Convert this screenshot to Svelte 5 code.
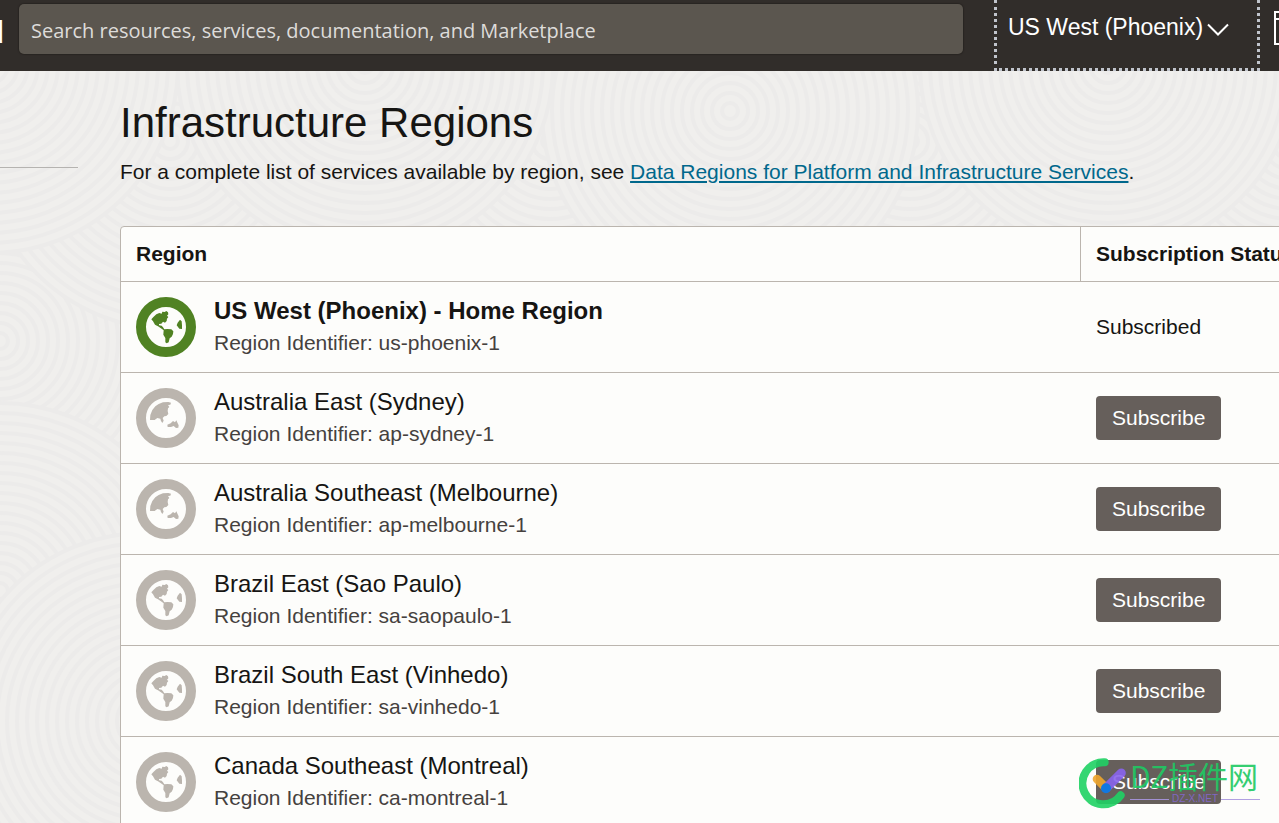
<script>
  const regions = [
    { name: 'US West (Phoenix) - Home Region', id: 'us-phoenix-1', globe: 'americas', home: true },
    { name: 'Australia East (Sydney)', id: 'ap-sydney-1', globe: 'asia' },
    { name: 'Australia Southeast (Melbourne)', id: 'ap-melbourne-1', globe: 'asia' },
    { name: 'Brazil East (Sao Paulo)', id: 'sa-saopaulo-1', globe: 'americas' },
    { name: 'Brazil South East (Vinhedo)', id: 'sa-vinhedo-1', globe: 'americas' },
    { name: 'Canada Southeast (Montreal)', id: 'ca-montreal-1', globe: 'americas' }
  ];
  const rings = Array.from({ length: 19 }, (_, i) => 188 - i * 10);
  const ripples = [
    [150, 250], [540, 260], [920, 260], [1290, 250], [0, 270], [0, 520], [145, 650],
    [170, 70], [550, 70], [910, 70], [1290, 70], [730, 40], [365, -6], [1108, -6], [-10, -6]
  ];
</script>

<div class="page">
  <header>
    <span class="brand">Cloud</span>
    <input class="search" type="search" aria-label="Search" placeholder="Search resources, services, documentation, and Marketplace" />
    <button class="region-menu">
      <span>US West (Phoenix)</span>
      <svg width="22" height="14" viewBox="0 0 22 14" aria-hidden="true"><path d="M1 1.500 11 11.500 21 1.500" fill="none" stroke="#fff" stroke-width="2" /></svg>
    </button>
    <button class="shell" aria-label="Developer tools">
      <svg width="40" height="34" viewBox="0 0 40 34" aria-hidden="true"><path d="M1 1H39V33H1ZM1 8H39" fill="none" stroke="#fff" stroke-width="2" /></svg>
    </button>
  </header>

  <div class="body">
    <svg class="texture" aria-hidden="true">
      {#each ripples as [x, y]}
        {#each rings as r, i}
          <circle cx={x} cy={y} {r} fill={i === 0 ? '#f0efed' : 'none'} stroke="#ecebea" stroke-width="4" />
        {/each}
      {/each}
    </svg>

    <aside><hr /></aside>
    <main>
      <h1>Infrastructure Regions</h1>
      <p class="intro">For a complete list of services available by region, see <a href="#regions">Data Regions for Platform and Infrastructure Services</a>.</p>

      <div class="table-wrap">
        <table id="regions">
          <thead>
            <tr><th scope="col">Region</th><th scope="col" class="status">Subscription Status</th></tr>
          </thead>
          <tbody>
            {#each regions as region}
              <tr class:home={region.home}>
                <td>
                  <div class="region">
                    <svg class="globe" viewBox="0 0 180 180" aria-hidden="true">
                      <circle cx="90" cy="90" r="75" fill="none" stroke="currentColor" stroke-width="30" />
                      {#if region.globe === 'americas'}
                        <path fill="currentColor" d="M46 67 53 59 61 52 70 48 77 50 79 44 86 45 91 42 96 46 97 52 93 56 97 60 93 65 92 72 87 77 81 74 76 80 69 81 69 85 77 86 81 91 85 97 94 96 106 97 112 103 111 111 107 119 101 124 98 136 92 139 88 136 88 123 82 113 83 100 77 95 66 88 57 83 51 73ZM132 68 137 73 138 85 138 96 130 95 122 85 125 77Z" />
                      {:else}
                        <path fill="currentColor" d="M42 96 43 81 49 66 58 55 68 48 81 43 97 42 105 44 103 50 96 51 100 57 96 61 95 69 97 78 91 84 85 85 80 90 83 98 79 105 75 99 73 92 64 90 56 96ZM94 110 104 106 111 99 117 103 121 97 125 106 128 112 127 119 120 120 113 114 105 117 95 117Z" />
                      {/if}
                    </svg>
                    <div>
                      <div class="name">{region.name}</div>
                      <div class="id">Region Identifier: {region.id}</div>
                    </div>
                  </div>
                </td>
                <td class="status">
                  {#if region.home}Subscribed{:else}<button class="subscribe">Subscribe</button>{/if}
                </td>
              </tr>
            {/each}
          </tbody>
        </table>
      </div>
    </main>
  </div>

  <div class="watermark">
    <svg width="48" height="52" viewBox="0 0 144 156" aria-hidden="true">
      <g fill="none" stroke-linecap="round">
        <path d="M77 16A63 63 0 1 0 125 115" stroke="#20d264" stroke-width="24" />
        <path d="M54 66 80 92" stroke="#f0a62c" stroke-width="26" />
        <path d="M82 93 127 48" stroke="#8964ed" stroke-width="27" />
      </g>
      <circle cx="81" cy="94" r="15" fill="#087bef" />
    </svg>
    <div class="mark-text">
      <div class="mark-name">DZ插件网</div>
      <div class="mark-site"><span>DZ-X.NET</span></div>
    </div>
  </div>
</div>

<style>
  :global(body) { margin: 0; }
  .page {
    position: relative;
    height: 100vh;
    overflow: hidden;
    display: flex;
    flex-direction: column;
    font-family: 'Liberation Sans', Arial, sans-serif;
    font-size: 21px;
    color: #161513;
    background: #f0efed;
  }
  button { font: inherit; cursor: pointer; }
  header {
    flex: none;
    display: flex;
    align-items: flex-start;
    height: 71px;
    background: #312d2a;
    color: #fff;
  }
  .brand {
    width: 4px;
    margin-right: 15px;
    display: flex;
    justify-content: flex-end;
    font-size: 32px;
    line-height: 64px;
  }
  .search {
    flex: 1;
    min-width: 0;
    height: 50px;
    margin: 4px 31px 0 0;
    padding: 2px 12px 0;
    box-sizing: border-box;
    border: 0;
    border-radius: 5px;
    background: #5b564f;
    box-shadow: 0 0 1px 1px #292522;
    color: #fff;
    font-family: 'Open Sans', 'Noto Sans', sans-serif;
    font-size: 20px;
  }
  .search::placeholder { color: #dedcda; opacity: 1; }
  .region-menu {
    flex: none;
    display: flex;
    align-items: flex-start;
    gap: 4px;
    width: 266px;
    height: 71px;
    padding: 14px 11px;
    border: 3px dotted #c0c4cc;
    border-top: 0;
    background: none;
    color: #fff;
    font-size: 23px;
    line-height: 26px;
    white-space: nowrap;
  }
  .region-menu svg { margin-top: 9px; }
  .shell {
    flex: none;
    width: 5px;
    margin: 11px 0 0 14px;
    padding: 0;
    border: 0;
    background: none;
    overflow: hidden;
    display: flex;
  }
  .shell svg { flex: none; }
  .body {
    position: relative;
    flex: 1;
    min-height: 0;
    display: flex;
  }
  .texture { position: absolute; inset: 0; width: 100%; height: 100%; }
  aside { flex: none; width: 78px; margin-right: 42px; position: relative; }
  hr { margin: 96px 0 0; border: 0; border-top: 1px solid #b5b3b0; }
  main { flex: 1; min-width: 0; position: relative; }
  h1 { margin: 28px 0 0; font-size: 42px; line-height: 48px; font-weight: 400; }
  .intro { margin: 12px 0 41px; line-height: 26px; white-space: nowrap; }
  a { color: #00688c; text-decoration: underline; text-decoration-thickness: 2px; text-underline-offset: 2px; }
  .table-wrap { overflow: hidden; }
  table {
    width: calc(100% + 40px);
    border: 1px solid #bbb5ae;
    border-radius: 4px;
    border-spacing: 0;
    table-layout: fixed;
    background: #fdfdfb;
  }
  th, td { box-sizing: border-box; padding: 0 15px; text-align: left; }
  th { height: 54px; font-weight: 700; white-space: nowrap; }
  .status { width: 238px; }
  th.status { border-left: 1px solid #bbb5ae; }
  td.status { padding-left: 16px; }
  td { height: 91px; border-top: 1px solid #bbb5ae; }
  .region { display: flex; align-items: center; gap: 18px; color: #bbb5ae; }
  .home .region { color: #508223; }
  .globe { width: 60px; height: 60px; }
  .name { font-size: 24px; line-height: 32px; color: #161513; }
  .home .name { font-weight: 700; }
  .id { line-height: 32px; color: #45413e; }
  .subscribe {
    display: block;
    height: 44px;
    padding: 0 16px;
    border: 0;
    border-radius: 4px;
    background: #665f5b;
    color: #fff;
  }
  .watermark {
    position: absolute;
    right: 19px;
    bottom: 14px;
    display: flex;
    gap: 3px;
    opacity: 0.9;
    pointer-events: none;
  }
  .mark-text { width: 130px; }
  .mark-name {
    font-family: 'Noto Sans CJK SC', sans-serif;
    font-size: 30px;
    line-height: 36px;
    color: #20c963;
    white-space: nowrap;
  }
  .mark-site {
    display: flex;
    align-items: center;
    gap: 3px;
    font-size: 10px;
    line-height: 12px;
    color: #8468cf;
  }
  .mark-site::before, .mark-site::after { content: ''; flex: 1; border-top: 1px solid #a996df; }
</style>
